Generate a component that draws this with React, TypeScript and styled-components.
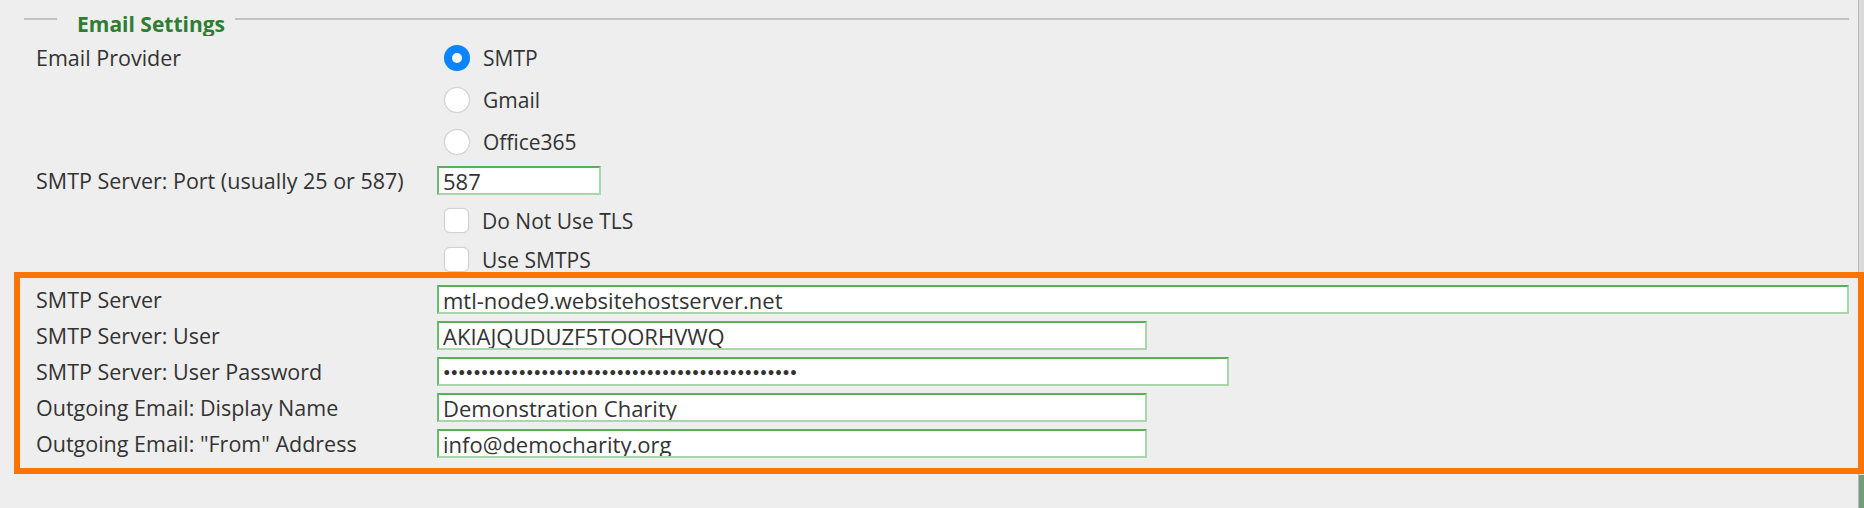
import React from 'react';
import styled, { createGlobalStyle } from 'styled-components';

const GlobalStyle = createGlobalStyle`
  body {
    margin: 0;
    background: #eeeeee;
    font-family: 'Open Sans', 'Liberation Sans', sans-serif;
    color: #333333;
  }
`;

const Page = styled.div`
  display: flex;
  width: 1864px;
  height: 508px;
  overflow: hidden;
  background: #eeeeee;
`;

const Content = styled.div`
  flex: 1;
  display: flex;
  flex-direction: column;
  padding: 0 9px 0 24px;
  min-width: 0;
`;

const Scrollbar = styled.div`
  width: 6px;
  display: flex;
  flex-direction: column;
  background: #dadada;
  border-left: 1px solid #b8b8b8;
  box-sizing: border-box;
`;

const ScrollSpacer = styled.div`
  flex: 0 0 475px;
`;

const ScrollThumb = styled.div`
  flex: 1;
  background: #729d78;
`;

const Header = styled.div`
  display: flex;
  align-items: flex-start;
  height: 37px;
`;

const Rule = styled.div<{ $grow?: boolean }>`
  height: 2px;
  margin-top: 18px;
  background: #c2c2c2;
  flex: ${(p) => (p.$grow ? 1 : '0 0 33px')};
`;

const Legend = styled.div`
  margin: 0 10px 0 20px;
  padding-top: 14px;
  height: 36px;
  box-sizing: border-box;
  overflow: hidden;
  color: #2e7d32;
  font-size: 21px;
  font-weight: 700;
  line-height: 21px;
`;

const Section = styled.div`
  padding-left: 12px;
`;

const Row = styled.div<{ $gap?: number }>`
  display: grid;
  grid-template-columns: 401px 1fr;
  align-items: start;
  margin-top: ${(p) => p.$gap ?? 0}px;
`;

const Label = styled.div<{ $h: number }>`
  font-size: 21.5px;
  line-height: ${(p) => p.$h}px;
  white-space: nowrap;
`;

const Options = styled.div`
  display: flex;
  flex-direction: column;
`;

const Option = styled.label<{ $h: number }>`
  display: flex;
  align-items: center;
  gap: 13px;
  height: ${(p) => p.$h}px;
  padding-left: 7px;
  font-size: 21px;
`;

const Radio = styled.span<{ $on?: boolean }>`
  width: 26px;
  height: 26px;
  box-sizing: border-box;
  border-radius: 50%;
  display: flex;
  align-items: center;
  justify-content: center;
  background: ${(p) => (p.$on ? '#0a84ff' : '#ffffff')};
  border: ${(p) => (p.$on ? 'none' : '1.5px solid #d2d2d2')};
  box-shadow: 0 0 1px rgba(0, 0, 0, 0.12);

  &::after {
    content: '';
    display: ${(p) => (p.$on ? 'block' : 'none')};
    width: 10px;
    height: 10px;
    border-radius: 50%;
    background: #ffffff;
  }
`;

const Check = styled.span`
  width: 25px;
  height: 25px;
  box-sizing: border-box;
  border-radius: 6px;
  background: #ffffff;
  border: 1.5px solid #d2d2d2;
  box-shadow: 0 0 1px rgba(0, 0, 0, 0.12);
`;

const Highlight = styled.div`
  position: relative;
  z-index: 1;
  margin: -7px -15px 0 -10px;
  padding: 7px 9px 10px 16px;
  border: 6px solid #ff7400;
  display: flex;
  flex-direction: column;
  gap: 7px;
`;

const Field = styled.input<{ $w?: number }>`
  width: ${(p) => (p.$w ? `${p.$w}px` : '100%')};
  height: 29px;
  box-sizing: border-box;
  margin: 0;
  padding: 0 4px;
  border: 2px solid;
  border-color: #5aae5e #a9d6ab #a9d6ab #6fba73;
  border-radius: 0;
  background: #ffffff;
  font-family: 'Open Sans', 'Liberation Sans', sans-serif;
  font-size: 22px;
  color: #333333;
  caret-color: #333333;
  outline: none;
`;

const Dots = styled(Field)`
  font-family: Lato, sans-serif;
  font-size: 13px;
`;

const smtpFields = [
  { label: 'SMTP Server', value: 'mtl-node9.websitehostserver.net' },
  { label: 'SMTP Server: User', value: 'AKIAJQUDUZF5TOORHVWQ', w: 710 },
  { label: 'Outgoing Email: Display Name', value: 'Demonstration Charity', w: 710 },
  { label: 'Outgoing Email: "From" Address', value: 'info@democharity.org', w: 710 },
];

export default function App() {
  const [server, user, display, from] = smtpFields;
  const noop = () => {};

  return (
    <>
      <GlobalStyle />
      <Page>
        <Content>
          <Header>
            <Rule />
            <Legend>Email Settings</Legend>
            <Rule $grow />
          </Header>
          <Section>
            <Row>
              <Label $h={42}>Email Provider</Label>
              <Options>
                <Option $h={42}>
                  <Radio $on />
                  SMTP
                </Option>
                <Option $h={42}>
                  <Radio />
                  Gmail
                </Option>
                <Option $h={42}>
                  <Radio />
                  Office365
                </Option>
              </Options>
            </Row>
            <Row $gap={3}>
              <Label $h={29}>SMTP Server: Port (usually 25 or 587)</Label>
              <Field $w={164} value="587" onChange={noop} />
            </Row>
            <Row $gap={6}>
              <span />
              <Options>
                <Option $h={39}>
                  <Check />
                  Do Not Use TLS
                </Option>
                <Option $h={39}>
                  <Check />
                  Use SMTPS
                </Option>
              </Options>
            </Row>
          </Section>
          <Highlight>
            <Row>
              <Label $h={29}>{server.label}</Label>
              <Field value={server.value} onChange={noop} />
            </Row>
            <Row>
              <Label $h={29}>{user.label}</Label>
              <Field $w={user.w} value={user.value} onChange={noop} />
            </Row>
            <Row>
              <Label $h={29}>SMTP Server: User Password</Label>
              <Dots $w={792} value={'•'.repeat(47)} onChange={noop} />
            </Row>
            <Row>
              <Label $h={29}>{display.label}</Label>
              <Field $w={display.w} value={display.value} onChange={noop} autoFocus />
            </Row>
            <Row>
              <Label $h={29}>{from.label}</Label>
              <Field $w={from.w} value={from.value} onChange={noop} />
            </Row>
          </Highlight>
        </Content>
        <Scrollbar>
          <ScrollSpacer />
          <ScrollThumb />
        </Scrollbar>
      </Page>
    </>
  );
}
